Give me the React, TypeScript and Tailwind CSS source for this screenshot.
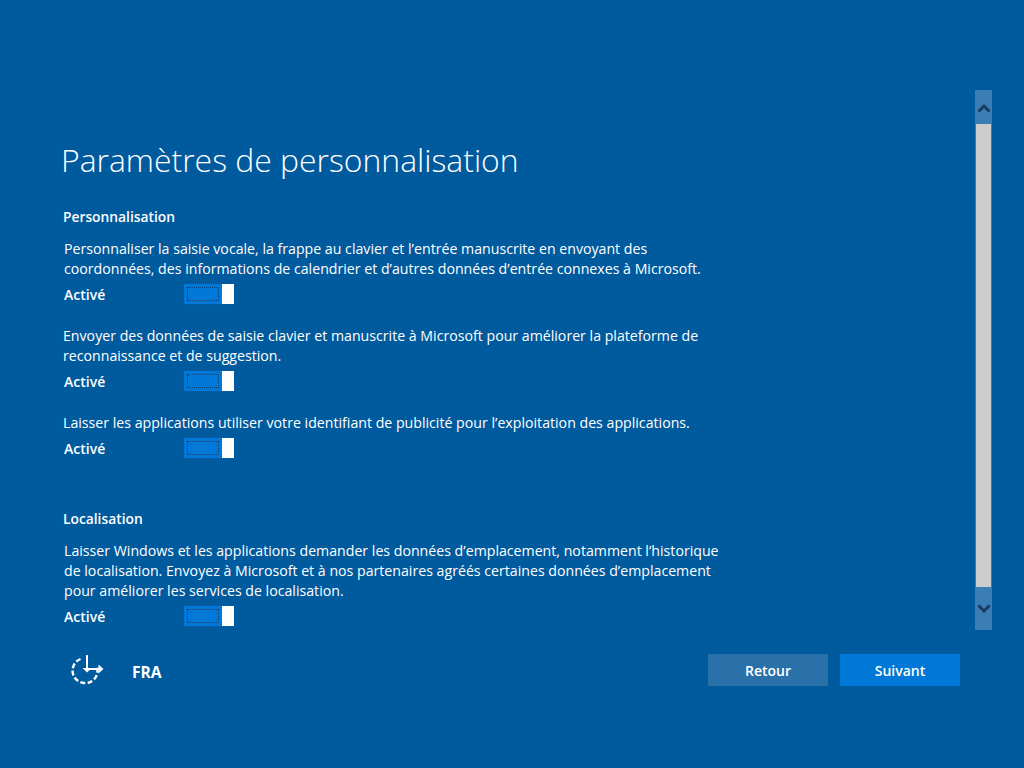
const FONT = "font-['Open_Sans','Noto_Sans',sans-serif]";

function Toggle() {
  return (
    <div className="relative flex h-5 w-[50px] bg-[#0078d7] outline-1 outline-dotted outline-[#0a5ba5]">
      <div className="relative flex-1">
        <div className="absolute inset-[3px] border border-dotted border-[#08427c]" />
      </div>
      <div className="h-5 w-3 bg-white" />
    </div>
  );
}

function Setting({ lines, indent, top }: { lines: string[]; indent: string; top: string }) {
  return (
    <div className={top}>
      <div className={`${indent} text-[14.16px] leading-5 text-white`}>
        {lines.map((l) => (
          <div key={l} className="whitespace-nowrap">{l}</div>
        ))}
      </div>
      <div className="mt-[5px] flex h-5 items-center pl-[64px]">
        <span className="w-[120px] text-[14px] font-semibold text-white">Activé</span>
        <Toggle />
      </div>
    </div>
  );
}

function Chevron({ up }: { up: boolean }) {
  return (
    <svg width="14" height="10" viewBox="0 0 14 10" fill="none" stroke="#1c3a60" strokeWidth="3">
      <path d={up ? "M1.5 8.5 L7 3 L12.5 8.5" : "M1.5 1.5 L7 7 L12.5 1.5"} />
    </svg>
  );
}

export default function App() {
  return (
    <div className={`${FONT} flex h-[768px] w-[1024px] flex-col overflow-hidden bg-[#005a9e]`}>
      <div className="mt-[90px] flex h-[540px]">
        <div className="flex-1">
          <h1 className="mt-[46px] pl-[61px] text-[31.9px] font-light leading-[48px] text-white">
            Paramètres de personnalisation
          </h1>
          <h2 className="mt-[23px] pl-[63px] text-[13.8px] font-semibold leading-5 text-white">Personnalisation</h2>
          <Setting
            top="mt-[12px]"
            indent="pl-[64px]"
            lines={[
              "Personnaliser la saisie vocale, la frappe au clavier et l’entrée manuscrite en envoyant des",
              "coordonnées, des informations de calendrier et d’autres données d’entrée connexes à Microsoft.",
            ]}
          />
          <Setting
            top="mt-[22px]"
            indent="pl-[63px]"
            lines={[
              "Envoyer des données de saisie clavier et manuscrite à Microsoft pour améliorer la plateforme de",
              "reconnaissance et de suggestion.",
            ]}
          />
          <Setting
            top="mt-[22px]"
            indent="pl-[63px]"
            lines={["Laisser les applications utiliser votre identifiant de publicité pour l’exploitation des applications."]}
          />
          <h2 className="mt-[51px] pl-[63px] text-[13.8px] font-semibold leading-5 text-white">Localisation</h2>
          <Setting
            top="mt-[12px]"
            indent="pl-[64px]"
            lines={[
              "Laisser Windows et les applications demander les données d’emplacement, notamment l’historique",
              "de localisation. Envoyez à Microsoft et à nos partenaires agréés certaines données d’emplacement",
              "pour améliorer les services de localisation.",
            ]}
          />
        </div>
        <div className="mr-[32px] flex w-[17px] flex-col items-center bg-[#3a7eb5]">
          <div className="flex h-[34px] items-center justify-center pt-[1px]"><Chevron up /></div>
          <div className="h-[463px] w-[15px] bg-[#cdcdcd]" />
          <div className="flex flex-1 items-center justify-center"><Chevron up={false} /></div>
        </div>
      </div>
      <div className="mt-[24px] flex h-8 items-center">
        <svg className="ml-[70px]" width="36" height="32" viewBox="0 0 36 32" fill="none" stroke="white" strokeWidth="2.4">
          <path d="M10.5 5 A12.5 12.5 0 1 0 27 13" strokeDasharray="5 2.4" />
          <path d="M17 1 V15" strokeWidth="2" />
          <path d="M12.5 14 H21.5 L17 18.5 Z" fill="white" stroke="none" />
          <path d="M19 15 H32" strokeWidth="2" />
          <path d="M28.5 10.5 L33.5 15 L28.5 19.5 Z" fill="white" stroke="none" />
        </svg>
        <span className="ml-[26px] pt-[3px] text-[15.6px] font-bold leading-5 text-white">FRA</span>
        <div className="ml-auto mr-[64px] flex gap-3">
          <button className="h-8 w-[120px] bg-[#2a70a9] text-[14px] font-semibold text-white">Retour</button>
          <button className="h-8 w-[120px] bg-[#0078d7] text-[14px] font-semibold text-white">Suivant</button>
        </div>
      </div>
    </div>
  );
}
